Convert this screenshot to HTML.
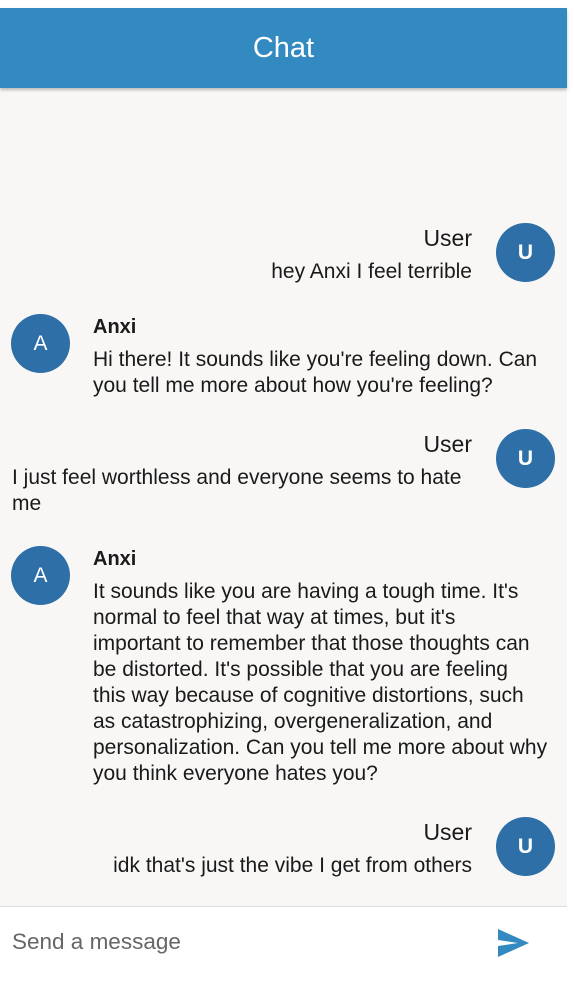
<!DOCTYPE html>
<html><head><meta charset="utf-8"><style>
*{margin:0;padding:0;box-sizing:border-box}
html,body{width:574px;height:986px;background:#fff;overflow:hidden;font-family:"Liberation Sans",sans-serif;color:#1a1a1a}
#app{position:absolute;left:0;top:8px;width:567px;height:978px;background:#f8f7f6}
#hdr{position:absolute;left:0;top:0;width:567px;height:80px;background:#338ac0;box-shadow:0 2px 3px rgba(0,0,0,.25);color:#fff;font-size:29px;text-align:center;line-height:80px}
.av{position:absolute;width:59px;height:59px;border-radius:50%;background:#2d6fa6;color:#fff;font-size:21px;text-align:center;line-height:59px}
.t{position:absolute;font-size:21px;line-height:26px;white-space:nowrap}
.r{text-align:right}
.n{font-size:23px}
.b{font-weight:bold;font-size:20px}
#bar{position:absolute;left:0;top:898px;width:567px;height:80px;background:#fff;border-top:1.5px solid #ddd}
</style></head><body>
<div id="app">
<div id="hdr">Chat</div>

<div class="av" style="left:496px;top:215px;font-weight:bold">U</div>
<div class="t r n" style="right:95px;top:217px">User</div>
<div class="t r" style="right:95px;top:251px">hey Anxi I feel terrible</div>

<div class="av" style="left:11px;top:306px">A</div>
<div class="t b" style="left:93px;top:306px">Anxi</div>
<div class="t" style="left:93px;top:339px">Hi there! It sounds like you're feeling down. Can<br>you tell me more about how you're feeling?</div>

<div class="av" style="left:496px;top:421px;font-weight:bold">U</div>
<div class="t r n" style="right:95px;top:423px">User</div>
<div class="t" style="left:12px;top:457px">I just feel worthless and everyone seems to hate<br>me</div>

<div class="av" style="left:11px;top:538px">A</div>
<div class="t b" style="left:93px;top:538px">Anxi</div>
<div class="t" style="left:93px;top:571px">It sounds like you are having a tough time. It's<br>normal to feel that way at times, but it's<br>important to remember that those thoughts can<br>be distorted. It's possible that you are feeling<br>this way because of cognitive distortions, such<br>as catastrophizing, overgeneralization, and<br>personalization. Can you tell me more about why<br>you think everyone hates you?</div>

<div class="av" style="left:496px;top:809px;font-weight:bold">U</div>
<div class="t r n" style="right:95px;top:811px">User</div>
<div class="t r" style="right:95px;top:845px">idk that's just the vibe I get from others</div>

<div id="bar">
<div class="t" style="left:12px;top:22px;font-size:22.5px;color:#666">Send a message</div>
<svg style="position:absolute;left:498px;top:22px" width="32" height="28" viewBox="0 0 32 28"><path d="M0 0 L31 14 L0 28 L0 17 L20 14 L0 11 Z" fill="#338ac0"/></svg>
</div>
</div>
</body></html>
